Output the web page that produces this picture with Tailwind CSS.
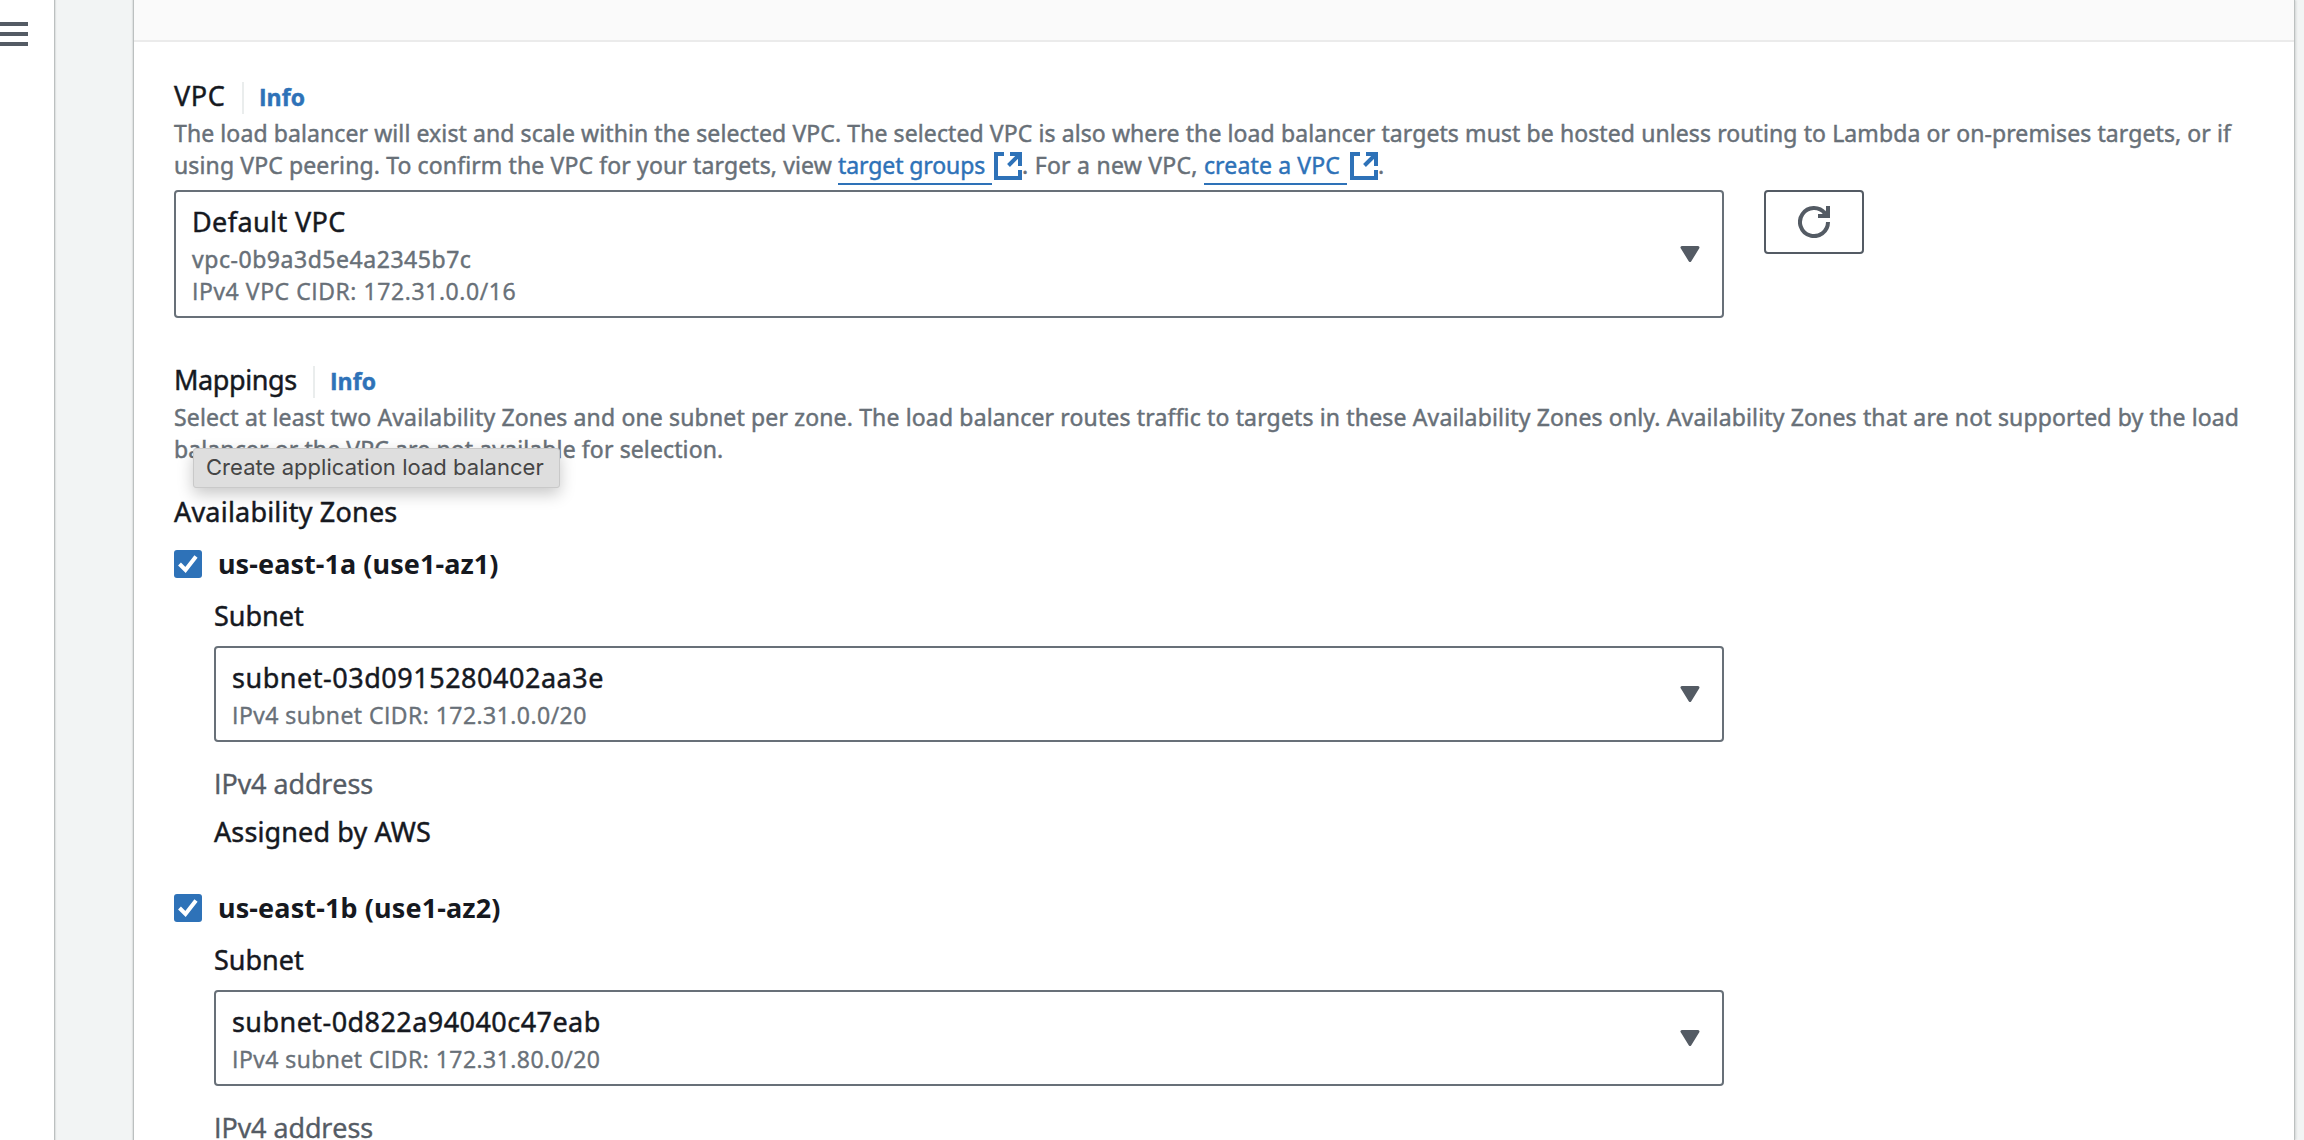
<!DOCTYPE html>
<html lang="en">
<head>
<meta charset="utf-8">
<title>Create application load balancer</title>
<script src="https://cdn.jsdelivr.net/npm/@tailwindcss/browser@4"></script>
</head>
<body class="h-[1140px] w-[2304px] overflow-hidden bg-[#f2f4f4] font-['Noto_Sans',sans-serif] text-[27px] leading-[44px] text-[#16191f] [-webkit-text-stroke:0.45px_currentColor]">
<svg class="hidden">
  <symbol id="external" viewBox="0 0 28 28"><path d="M10 2H2v24h24v-8M16 2h10v12M26 2 14.5 13.5" fill="none" stroke="currentColor" stroke-width="4"/></symbol>
  <symbol id="caret" viewBox="0 0 20 16"><path d="M2 1.5h16L10 14.5z" fill="currentColor" stroke="currentColor" stroke-width="3" stroke-linejoin="round"/></symbol>
  <symbol id="check" viewBox="0 0 28 28"><path d="M5.5 14 11.5 20 22 6.5" fill="none" stroke="currentColor" stroke-width="4"/></symbol>
</svg>
<div class="flex h-[1140px]">
  <!-- Collapsed navigation -->
  <nav class="z-10 w-[54px] shrink-0 bg-white pt-[22px] shadow-[1px_0_0_#bcc0c0,2px_0_1px_#dfe2e2]">
    <div class="flex w-7 flex-col gap-1.5">
      <div class="h-1 bg-[#545b64]"></div>
      <div class="h-1 bg-[#545b64]"></div>
      <div class="h-1 bg-[#545b64]"></div>
    </div>
  </nav>

  <main class="ml-20 h-[1140px] w-[2160px] shrink-0 bg-white shadow-[-1px_0_0_#bcc0c0,1px_0_0_#bcc0c0,2px_0_2px_#d0d4d4,-2px_0_1px_#dfe2e2]">
    <div class="h-[42px] border-b-2 border-[#ebebeb] bg-[#fafafa]"></div>

    <div class="pt-8 pl-10">
      <!-- VPC -->
      <section>
        <div class="flex h-11 items-baseline">
          <span class="w-[52px] tracking-[0.6px]">VPC</span>
          <span class="mt-2 ml-4 h-8 w-0.5 self-start bg-[#eaeded]"></span>
          <a class="-mt-px ml-[15px] font-['Open_Sans',sans-serif] text-[23px] leading-[42px] font-bold text-[#2e72b8]">Info</a>
        </div>
        <p class="-mt-px pb-px text-[23px] leading-8 whitespace-nowrap text-[#687078]"><span class="tracking-[0.096px]">The load balancer will exist and scale within the selected VPC. The selected VPC is also where the load balancer targets must be hosted unless routing to Lambda or on-premises targets, or if</span><br><span class="tracking-[0.125px]">using VPC peering. To confirm the VPC for your targets, view </span><a class="border-b-2 border-[#2e72b8] pr-[7px] pb-0.5 tracking-[-0.1px] text-[#2e72b8]">target groups</a><svg class="ml-0.5 inline-block size-7 align-[-6px] text-[#2e72b8]"><use href="#external"/></svg><span class="tracking-[0.25px]">. For a new VPC, </span><a class="border-b-2 border-[#2e72b8] pr-[7px] pb-0.5 tracking-[0.15px] text-[#2e72b8]">create a VPC</a><svg class="ml-[3px] inline-block size-7 align-[-6px] text-[#2e72b8]"><use href="#external"/></svg>.</p>
        <div class="mt-2 flex items-start gap-10">
          <div class="flex h-32 w-[1550px] items-center justify-between rounded-[4px] border-2 border-[#687078] pr-[22px] pl-4">
            <div>
              <div class="tracking-[0.4px]">Default VPC</div>
              <div class="-mt-px text-[23px] leading-8 tracking-[0.54px] text-[#687078]">vpc-0b9a3d5e4a2345b7c</div>
              <div class="pb-px font-['Open_Sans',sans-serif] text-[23px] leading-8 tracking-[0.59px] text-[#687078]">IPv4 VPC CIDR: 172.31.0.0/16</div>
            </div>
            <svg class="h-4 w-5 text-[#545b64]"><use href="#caret"/></svg>
          </div>
          <button class="flex h-16 w-[100px] items-center justify-center rounded-[4px] border-2 border-[#545b64] text-[#545b64]">
            <svg class="size-8" viewBox="0 0 32 32" fill="none" stroke="currentColor" stroke-width="4"><path d="M30 16A14 14 0 1 1 27 7.4M30 0v10H20"/><path d="M30 0v12H20v-2h5z" fill="currentColor" stroke="none"/></svg>
          </button>
        </div>
      </section>

      <!-- Mappings -->
      <section class="mt-10">
        <div class="flex h-11 items-baseline">
          <span class="w-[123px] tracking-[-0.4px]">Mappings</span>
          <span class="mt-2 ml-4 h-8 w-0.5 self-start bg-[#eaeded]"></span>
          <a class="-mt-px ml-[15px] font-['Open_Sans',sans-serif] text-[23px] leading-[42px] font-bold text-[#2e72b8]">Info</a>
        </div>
        <div class="relative">
          <p class="-mt-px pb-px text-[23px] leading-8 whitespace-nowrap text-[#687078]"><span class="tracking-[0.151px]">Select at least two Availability Zones and one subnet per zone. The load balancer routes traffic to targets in these Availability Zones only. Availability Zones that are not supported by the load</span><br><span class="tracking-[0.12px]">balancer or the VPC are not available for selection.</span></p>
          <div class="absolute top-[47px] left-[19px] flex h-10 w-[367px] items-center rounded-[3px] border border-[#c9c9c9] bg-[#dedede] pb-0.5 pl-[12px] font-['Inter',sans-serif] text-[22px] leading-none tracking-[0.04px] whitespace-nowrap text-[#454545] shadow-[0_6px_16px_rgba(0,0,0,0.22)] [-webkit-text-stroke:0px]">Create application load balancer</div>
        </div>

        <h3 class="mt-6 tracking-[0.2px]">Availability Zones</h3>

        <div class="mt-2 flex flex-col gap-8">
          <div>
            <div class="flex items-center gap-4">
              <span class="size-7 rounded-[3px] bg-[#2e72b8] text-white"><svg class="size-7"><use href="#check"/></svg></span>
              <span class="font-bold tracking-[0.07px] [-webkit-text-stroke:0px]">us-east-1a (use1-az1)</span>
            </div>
            <div class="mt-2 ml-10">
              <div>Subnet</div>
              <div class="mt-2 flex h-24 w-[1510px] items-center justify-between rounded-[4px] border-2 border-[#687078] pr-[22px] pl-4">
                <div>
                  <div class="tracking-[0.52px]">subnet-03d0915280402aa3e</div>
                  <div class="-mt-px pb-px font-['Open_Sans',sans-serif] text-[23px] leading-8 tracking-[0.48px] text-[#687078]">IPv4 subnet CIDR: 172.31.0.0/20</div>
                </div>
                <svg class="h-4 w-5 text-[#545b64]"><use href="#caret"/></svg>
              </div>
              <div class="mt-5 font-['Open_Sans',sans-serif] tracking-[-0.05px] text-[#545b64]">IPv4 address</div>
              <div class="mt-1 tracking-[0.12px]">Assigned by AWS</div>
            </div>
          </div>

          <div>
            <div class="flex items-center gap-4">
              <span class="size-7 rounded-[3px] bg-[#2e72b8] text-white"><svg class="size-7"><use href="#check"/></svg></span>
              <span class="font-bold tracking-[0.12px] [-webkit-text-stroke:0px]">us-east-1b (use1-az2)</span>
            </div>
            <div class="mt-2 ml-10">
              <div>Subnet</div>
              <div class="mt-2 flex h-24 w-[1510px] items-center justify-between rounded-[4px] border-2 border-[#687078] pr-[22px] pl-4">
                <div>
                  <div class="tracking-[0.44px]">subnet-0d822a94040c47eab</div>
                  <div class="-mt-px pb-px font-['Open_Sans',sans-serif] text-[23px] leading-8 tracking-[0.48px] text-[#687078]">IPv4 subnet CIDR: 172.31.80.0/20</div>
                </div>
                <svg class="h-4 w-5 text-[#545b64]"><use href="#caret"/></svg>
              </div>
              <div class="mt-5 font-['Open_Sans',sans-serif] tracking-[-0.05px] text-[#545b64]">IPv4 address</div>
            </div>
          </div>
        </div>
      </section>
    </div>
  </main>
</div>
</body>
</html>
